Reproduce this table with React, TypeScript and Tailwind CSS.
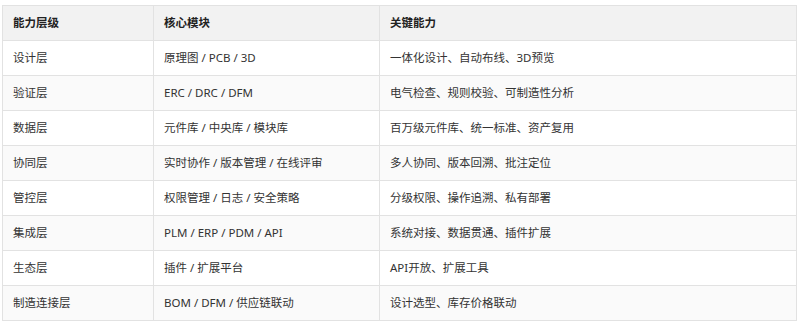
const rows = [
  ['设计层', '原理图 / PCB / 3D', '一体化设计、自动布线、3D预览'],
  ['验证层', 'ERC / DRC / DFM', '电气检查、规则校验、可制造性分析'],
  ['数据层', '元件库 / 中央库 / 模块库', '百万级元件库、统一标准、资产复用'],
  ['协同层', '实时协作 / 版本管理 / 在线评审', '多人协同、版本回溯、批注定位'],
  ['管控层', '权限管理 / 日志 / 安全策略', '分级权限、操作追溯、私有部署'],
  ['集成层', 'PLM / ERP / PDM / API', '系统对接、数据贯通、插件扩展'],
  ['生态层', '插件 / 扩展平台', 'API开放、扩展工具'],
  ['制造连接层', 'BOM / DFM / 供应链联动', '设计选型、库存价格联动'],
];

export default function App() {
  return (
    <div
      className="w-[800px] h-[323px] bg-white pl-[2px] pt-[5px] overflow-hidden"
      style={{ fontFamily: '"Noto Sans", "Noto Sans CJK SC", sans-serif' }}
    >
      <table className="w-[795px] border-collapse table-fixed text-[11.5px] text-[#333]">
        <colgroup>
          <col className="w-[151px]" />
          <col className="w-[226px]" />
          <col />
        </colgroup>
        <thead>
          <tr className="h-[35px] bg-[#f2f2f2]">
            {['能力层级', '核心模块', '关键能力'].map((h) => (
              <th
                key={h}
                className="border border-[#e2e2e2] pl-[10px] text-left font-bold text-[#222]"
              >
                {h}
              </th>
            ))}
          </tr>
        </thead>
        <tbody>
          {rows.map((r, i) => (
            <tr key={i} className={`h-[35px] ${i % 2 === 1 ? 'bg-[#fafafa]' : 'bg-white'}`}>
              {r.map((c, j) => (
                <td key={j} className="border border-[#e2e2e2] pl-[10px] whitespace-nowrap">
                  {c}
                </td>
              ))}
            </tr>
          ))}
        </tbody>
      </table>
    </div>
  );
}
